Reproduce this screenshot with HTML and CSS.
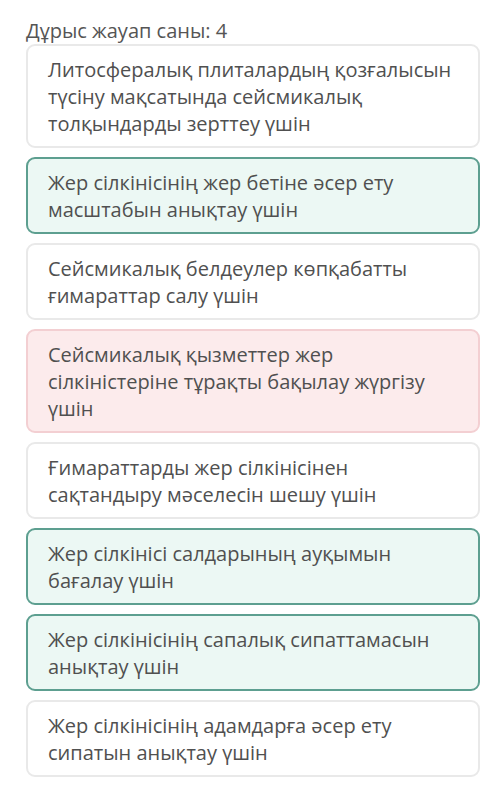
FILE: index.html
```html
<!DOCTYPE html>
<html lang="kk">
<head>
<meta charset="utf-8">
<link rel="stylesheet" href="styles.css">
</head>
<body>
<main class="quiz">
  <h1 class="title">Дұрыс жауап саны: 4</h1>
  <div class="options">
    <div class="option">Литосфералық плиталардың қозғалысын түсіну мақсатында сейсмикалық толқындарды зерттеу үшін</div>
    <div class="option correct">Жер сілкінісінің жер бетіне әсер ету масштабын анықтау үшін</div>
    <div class="option">Сейсмикалық белдеулер көпқабатты ғимараттар салу үшін</div>
    <div class="option wrong">Сейсмикалық қызметтер жер сілкіністеріне тұрақты бақылау жүргізу үшін</div>
    <div class="option">Ғимараттарды жер сілкінісінен сақтандыру мәселесін шешу үшін</div>
    <div class="option correct">Жер сілкінісі салдарының ауқымын бағалау үшін</div>
    <div class="option correct">Жер сілкінісінің сапалық сипаттамасын анықтау үшін</div>
    <div class="option">Жер сілкінісінің адамдарға әсер ету сипатын анықтау үшін</div>
  </div>
</main>
</body>
</html>
```
FILE: styles.css
```css
html, body {
  margin: 0;
  padding: 0;
  background: #ffffff;
}
body {
  font-family: "Open Sans", "Noto Sans", sans-serif;
  color: #4f4f4f;
}
.quiz {
  padding: 17px 20px 0 26px;
}
.title {
  margin: 0;
  font-size: 20px;
  font-weight: 400;
  line-height: 27px;
  color: #555555;
}
.options {
  display: flex;
  flex-direction: column;
  gap: 9px;
  width: 454px;
}
.option {
  box-sizing: border-box;
  border: 2px solid #e9e9e9;
  border-radius: 9px;
  background: #ffffff;
  padding: 10px 15px 9px 20px;
  font-size: 20px;
  line-height: 27px;
  color: #505050;
}
.option.correct {
  background: #ecf8f4;
  border-color: #5d9f90;
}
.option.wrong {
  background: #fcebec;
  border-color: #f3cfd2;
}
```
